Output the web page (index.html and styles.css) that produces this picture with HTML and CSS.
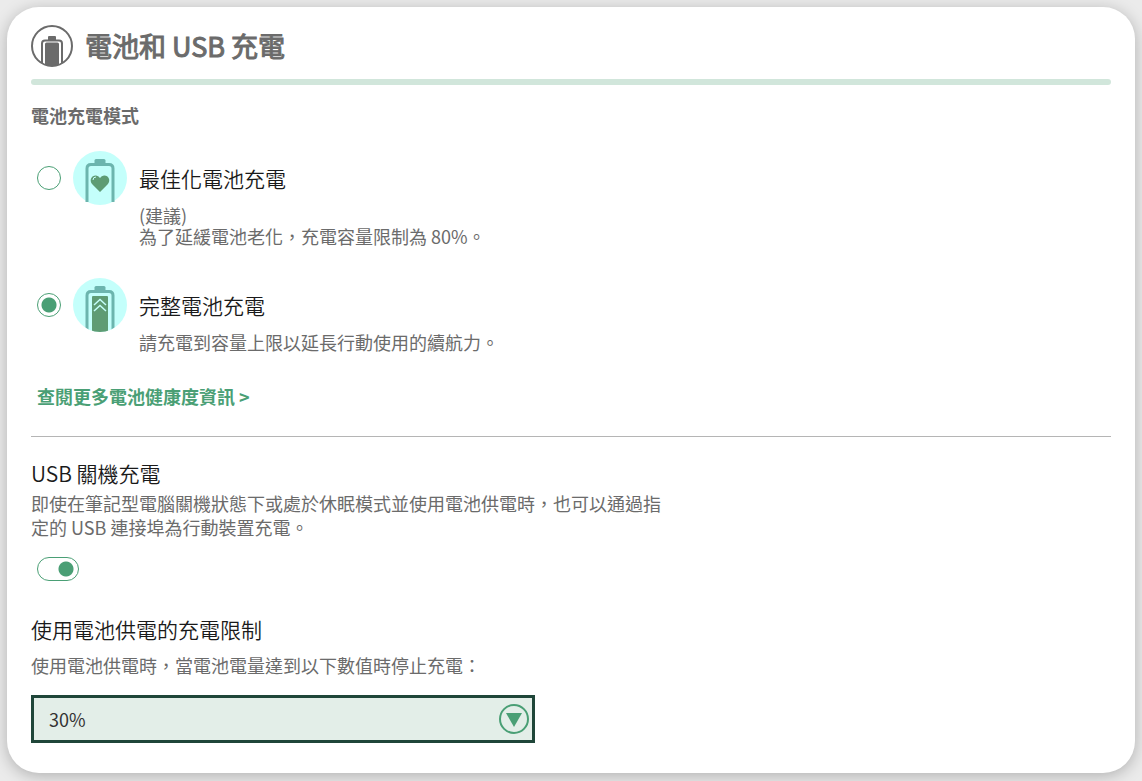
FILE: index.html
```html
<!DOCTYPE html>
<html lang="zh-Hant">
<head>
  <meta charset="UTF-8">
  <meta name="viewport" content="width=device-width, initial-scale=1.0">
  <title>電池和 USB 充電</title>
  <link rel="stylesheet" href="styles.css">
</head>

<body>
  <main class="card">
    <header class="card-header">
      <svg class="header-icon" viewBox="0 0 42 42" aria-hidden="true">
        <defs><clipPath id="ring"><circle cx="21" cy="21" r="20"/></clipPath></defs>
        <g clip-path="url(#ring)">
          <rect x="17" y="11" width="8" height="5" rx="1" fill="#6b6b6b"/>
          <path d="M11 42V18.500q0-3 3-3h14q3 0 3 3v24" fill="none" stroke="#6b6b6b" stroke-width="2"/>
          <path d="M14 42V19q0-1.500 1.500-1.500h11q1.500 0 1.500 1.500v23z" fill="#6b6b6b"/>
        </g>
        <circle cx="21" cy="21" r="20" fill="none" stroke="#6b6b6b" stroke-width="2"/>
      </svg>
      <h1>電池和 USB 充電</h1>
    </header>
    <div class="bar"></div>

    <!-- 充電模式 -->
    <fieldset class="modes">
      <legend>電池充電模式</legend>
      <div class="mode">
        <input type="radio" name="mode" id="mode-optimized">
        <svg class="mode-icon" viewBox="0 0 54 54" aria-hidden="true">
          <circle cx="27" cy="27" r="27" fill="#c4fffb"/>
          <path d="M21.500 13V9.500q0-1.500 1.500-1.500h8q1.500 0 1.500 1.500v3.500z" fill="#6cb5ae"/>
          <path d="M14 51V17.500q0-4 4-4h18q4 0 4 4V51" fill="none" stroke="#6cb5ae" stroke-width="3"/>
          <path d="M27 41l-7.500-7.500c-4-4.500-.5-9.500 3.500-9q2.500.3 4 2.500q1.500-2.200 4-2.500c4-.5 7.500 4.500 3.500 9z" fill="#5e9c74"/>
          <path d="M20 29q0-3 3-3" fill="none" stroke="#c4fffb" stroke-width="1"/>
        </svg>
        <div class="mode-text">
          <label for="mode-optimized">最佳化電池充電</label>
          <p>(建議)<br>為了延緩電池老化，充電容量限制為 80%。</p>
        </div>
      </div>
      <div class="mode">
        <input type="radio" name="mode" id="mode-full" checked>
        <svg class="mode-icon" viewBox="0 0 54 54" aria-hidden="true">
          <defs><clipPath id="disc"><circle cx="27" cy="27" r="27"/></clipPath></defs>
          <circle cx="27" cy="27" r="27" fill="#c4fffb"/>
          <g clip-path="url(#disc)">
            <path d="M21.500 13V9.500q0-1.500 1.500-1.500h8q1.500 0 1.500 1.500v3.500z" fill="#6cb5ae"/>
            <path d="M14 54V17.500q0-4 4-4h18q4 0 4 4V54" fill="none" stroke="#6cb5ae" stroke-width="3"/>
            <path d="M19 54V19q0-1 1-1h14q1 0 1 1v35z" fill="#5e9c74"/>
          </g>
          <path d="M21 27l6-5.500 6 5.500M21 33l6-5.500 6 5.500" fill="none" stroke="#c4fffb" stroke-width="1.500"/>
        </svg>
        <div class="mode-text">
          <label for="mode-full">完整電池充電</label>
          <p>請充電到容量上限以延長行動使用的續航力。</p>
        </div>
      </div>
    </fieldset>
    <a class="more" href="#">查閱更多電池健康度資訊 &gt;</a>

    <!-- USB 關機充電 -->
    <section class="usb">
      <h2><label for="usb-charge">USB 關機充電</label></h2>
      <p>即使在筆記型電腦關機狀態下或處於休眠模式並使用電池供電時，也可以通過指定的 USB 連接埠為行動裝置充電。</p>
      <input class="toggle" type="checkbox" role="switch" id="usb-charge" checked>
    </section>

    <!-- 充電限制 -->
    <section class="limit">
      <h2>使用電池供電的充電限制</h2>
      <label for="limit">使用電池供電時，當電池電量達到以下數值時停止充電：</label>
      <div class="select-box">
        <select id="limit">
          <option>10%</option>
          <option>20%</option>
          <option selected>30%</option>
          <option>40%</option>
          <option>50%</option>
        </select>
        <svg class="arrow" viewBox="0 0 30 30" aria-hidden="true">
          <circle cx="15" cy="15" r="14" fill="none" stroke="#4a9f75" stroke-width="2"/>
          <path d="M7 9h16l-8 14z" fill="#4a9f75"/>
        </svg>
      </div>
    </section>
  </main>
</body>
</html>
```
FILE: styles.css
```css
* {
  box-sizing: border-box;
}
body {
  margin: 0;
  padding: 7px 7px 8px;
  background-color: #ebebeb;
  color: #6b6b6b;
  font-family: "Noto Sans CJK TC", sans-serif;
  font-size: 18px;
  line-height: 24px;
}
h1, h2, p {
  margin: 0;
}
.card {
  padding: 18px 24px 30px;
  background-color: #fff;
  border-radius: 32px;
  box-shadow: 0 3px 16px rgba(0, 0, 0, 0.25);
}

/* 標題 */
.card-header {
  display: flex;
  align-items: center;
  gap: 12px;
}
.header-icon {
  width: 42px;
  height: 42px;
}
h1 {
  font-size: 27px;
  font-weight: 400;
  line-height: 42px;
  -webkit-text-stroke: 1px #6b6b6b;
}
h2, .mode label {
  color: #1a1a1a;
  font-size: 21px;
  font-weight: 350;
  line-height: 30px;
}
.bar {
  height: 6px;
  margin: 12px 0 18px;
  border-radius: 3px;
  background-color: #d1e6db;
}

/* 充電模式 */
.modes {
  margin: 0;
  padding: 0;
  border: none;
}
legend {
  padding: 0;
  font-weight: 700;
}
.mode {
  display: flex;
  align-items: flex-start;
  gap: 12px;
  padding-left: 6px;
  margin-top: 24px;
}
.mode + .mode {
  margin-top: 31px;
}
.mode input {
  appearance: none;
  width: 24px;
  height: 24px;
  margin: 15px 0;
  border: 1px solid #4a9f75;
  border-radius: 50%;
}
.mode input:checked {
  background: radial-gradient(circle, #4a9f75 7px, transparent 8px);
}
.mode-icon {
  width: 54px;
  height: 54px;
}
.mode-text label {
  display: block;
  padding: 12px 0;
}
.mode-text p {
  line-height: 21px;
}
.more {
  display: inline-block;
  margin: 31px 6px 0;
  color: #4a9f75;
  font-weight: 700;
  text-decoration: none;
}

/* USB 關機充電 */
.usb {
  margin-top: 28px;
  padding-top: 21px;
  border-top: 1px solid #b5b5b5;
}
.usb p {
  max-width: 640px;
  margin-top: 3px;
}
.toggle {
  appearance: none;
  display: block;
  width: 42px;
  height: 24px;
  margin: 18px 6px 0;
  border: 1px solid #4a9f75;
  border-radius: 12px;
  background: radial-gradient(circle at 12px 11px, #4a9f75 7px, transparent 8px);
}
.toggle:checked {
  background: radial-gradient(circle at 28px 11px, #4a9f75 7px, transparent 8px);
}

/* 充電限制 */
.limit {
  margin-top: 33px;
}
.limit > label {
  display: block;
  margin: 9px 0 18px;
}
.select-box {
  position: relative;
  max-width: 504px;
}
select {
  appearance: none;
  display: block;
  width: 100%;
  height: 48px;
  padding: 0 48px 0 15px;
  border: 3px solid #1f4639;
  border-radius: 0;
  background-color: #e3eee8;
  color: #333;
  font: inherit;
}
.arrow {
  position: absolute;
  top: 9px;
  right: 6px;
  width: 30px;
  height: 30px;
  pointer-events: none;
}
```
